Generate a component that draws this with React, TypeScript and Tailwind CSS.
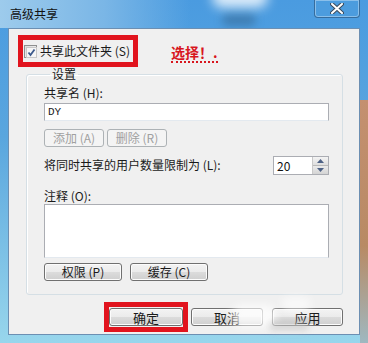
import type { ReactNode } from 'react'

const btn =
  'h-[18px] rounded-[3px] border border-[#707070] bg-[linear-gradient(to_bottom,#f3f3f3_0%,#ebebeb_50%,#dcdcdc_50%,#cfcfcf_100%)] text-[12px] leading-none text-[#1a1a1a] flex items-center justify-center shadow-[inset_0_0_0_1px_#fcfcfc]'

const disabledBtn =
  'h-[18px] rounded-[3px] border border-[#adb2b5] bg-[#f4f4f4] text-[12px] leading-none text-[#a0a0a0] flex items-center justify-center'

function Win7Button({ children, className = '' }: { children: ReactNode; className?: string }) {
  return <div className={`${btn} ${className}`}>{children}</div>
}

function CheckBox() {
  return (
    <div className="w-[13px] h-[13px] border border-[#8e8f8f] bg-[linear-gradient(135deg,#dcdcdc,#fbfbfb)] p-[1px]">
      <svg width="11" height="11" viewBox="0 0 11 11">
        <rect x="0.5" y="0.5" width="10" height="10" fill="#f6f6f6" stroke="#c8c8c8" />
        <path d="M2.5 5.5 L4.5 8 L8.5 2.5" fill="none" stroke="#3c5a8c" strokeWidth="1.8" />
      </svg>
    </div>
  )
}

function Spinner() {
  return (
    <div className="flex w-[56px] h-[19px] border border-[#abadb3] bg-white">
      <div className="flex-1 pl-[3px] text-[12px] leading-[17px] text-[#111]">20</div>
      <div className="w-[16px] flex flex-col border-l border-[#c9c9c9]">
        <div className="flex-1 flex items-center justify-center bg-[linear-gradient(to_bottom,#f4f4f4,#dedede)] border-b border-[#b9b9b9]">
          <svg width="7" height="4" viewBox="0 0 7 4"><path d="M0 4 L3.5 0 L7 4 Z" fill="#4d6185" /></svg>
        </div>
        <div className="flex-1 flex items-center justify-center bg-[linear-gradient(to_bottom,#ebebeb,#d4d4d4)]">
          <svg width="7" height="4" viewBox="0 0 7 4"><path d="M0 0 L3.5 4 L7 0 Z" fill="#4d6185" /></svg>
        </div>
      </div>
    </div>
  )
}

export default function App() {
  return (
    <div className="w-[368px] h-[343px] overflow-hidden relative bg-[linear-gradient(to_bottom,#4a9be0,#5aa6de_40%,#98d6ec_100%)] font-['Noto_Sans_CJK_SC',sans-serif] text-[12px] text-[#1a1a1a]">
      {/* glass glow in the title bar */}
      <div className="absolute left-[212px] top-[-14px] w-[56px] h-[22px] rounded-full bg-white/80 blur-[6px]" />
      <div className="absolute left-[222px] top-[14px] w-[34px] h-[12px] rounded-full bg-[#2b4f70]/40 blur-[4px]" />
      <div className="absolute left-0 top-0 w-[190px] h-[28px] bg-[linear-gradient(to_right,#9dcbec,#7ab6e6_55%,transparent)]" />
      {/* right side desktop showing through */}
      <div className="absolute right-0 top-[100px] w-[8px] h-[243px] bg-[linear-gradient(to_bottom,#c49070,#b88a64_60%,#9fb8c0)]" />

      <div className="relative h-[28px] flex items-start justify-between pl-[10px] pr-[8px]">
        <div className="pt-[7px] text-[12px] leading-[14px] text-[#111]">高级共享</div>
        <div className="w-[46px] h-[19px] mt-[-1px] rounded-b-[4px] border border-[#2e5880]/70 shadow-[inset_0_0_0_1px_rgba(255,255,255,0.35)] flex items-center justify-center bg-[#4e9ddd]/40">
          <svg width="14" height="11" viewBox="0 0 14 11">
            <path d="M2 1 L12 10 M12 1 L2 10" stroke="#3a4a5c" strokeWidth="4" strokeLinecap="round" />
            <path d="M2 1 L12 10 M12 1 L2 10" stroke="#ffffff" strokeWidth="2" strokeLinecap="round" />
          </svg>
        </div>
      </div>

      <div className="relative mx-[8px] h-[307px] bg-[#f0f0f0] border border-[#6c8fb2] pl-[9px] pt-[6px] pr-[16px] flex flex-col">
        <div className="flex items-center">
          <div className="w-[120px] h-[32px] border-[5px] border-[#e1141e] flex items-center pl-[1px] bg-[#f0f0f0]">
            <CheckBox />
            <span className="ml-[3px] leading-[14px] whitespace-nowrap">共享此文件夹 (S)</span>
          </div>
          <span className="ml-[33px] mt-[4px] text-[14px] leading-[16px] font-bold text-[#d8161e] border-b-2 border-dotted border-[#d8161e] pb-[1px]">
            选择！.
          </span>
        </div>

        <fieldset className="ml-[8px] mt-[-1px] border border-[#d5dfe5] rounded-[3px] shadow-[inset_1px_1px_0_#ffffff] pl-[17px] pr-[13px] pb-[13px]">
          <legend className="ml-[6px] px-[2px] leading-[16px]">设置</legend>
          <div className="mt-[4px] leading-[14px]">共享名 (H):</div>
          <div className="mt-[3px] h-[18px] border border-[#abadb3] border-b-[#e3e9ef] bg-white pl-[3px] font-['Liberation_Mono',monospace] text-[11px] leading-[16px]">
            DY
          </div>
          <div className="mt-[8px] flex gap-[3px]">
            <div className={`${disabledBtn} w-[60px]`}>添加 (A)</div>
            <div className={`${disabledBtn} w-[60px]`}>删除 (R)</div>
          </div>
          <div className="mt-[9px] flex justify-between items-start">
            <span className="mt-[2px] leading-[14px]">将同时共享的用户数量限制为 (L):</span>
            <Spinner />
          </div>
          <div className="mt-[14px] leading-[14px]">注释 (O):</div>
          <div className="mt-[1px] h-[54px] border border-[#abadb3] border-b-[#e3e9ef] bg-white" />
          <div className="mt-[5px] flex gap-[8px]">
            <Win7Button className="w-[78px]">权限 (P)</Win7Button>
            <Win7Button className="w-[78px]">缓存 (C)</Win7Button>
          </div>
        </fieldset>

        <div className="mt-[7px] flex items-center pl-[86px]">
          <div className="border-[5px] border-[#e1141e] px-0 py-[1px]">
            <Win7Button className="w-[74px] text-[13px]">确定</Win7Button>
          </div>
          <Win7Button className="w-[73px] ml-[3px] text-[13px]">取消</Win7Button>
          <Win7Button className="w-[72px] ml-[9px] text-[13px]">应用</Win7Button>
        </div>
        {/* watermark smudges over the bottom buttons */}
        <div className="absolute left-[222px] top-[276px] w-[46px] h-[22px] rounded-full bg-white/75 blur-[4px]" />
        <div className="absolute left-[272px] top-[268px] w-[30px] h-[14px] rounded-full bg-white/60 blur-[4px]" />
        <div className="absolute left-[260px] top-[292px] w-[40px] h-[10px] rounded-full bg-[#c8c8c8]/60 blur-[3px]" />
      </div>
    </div>
  )
}
